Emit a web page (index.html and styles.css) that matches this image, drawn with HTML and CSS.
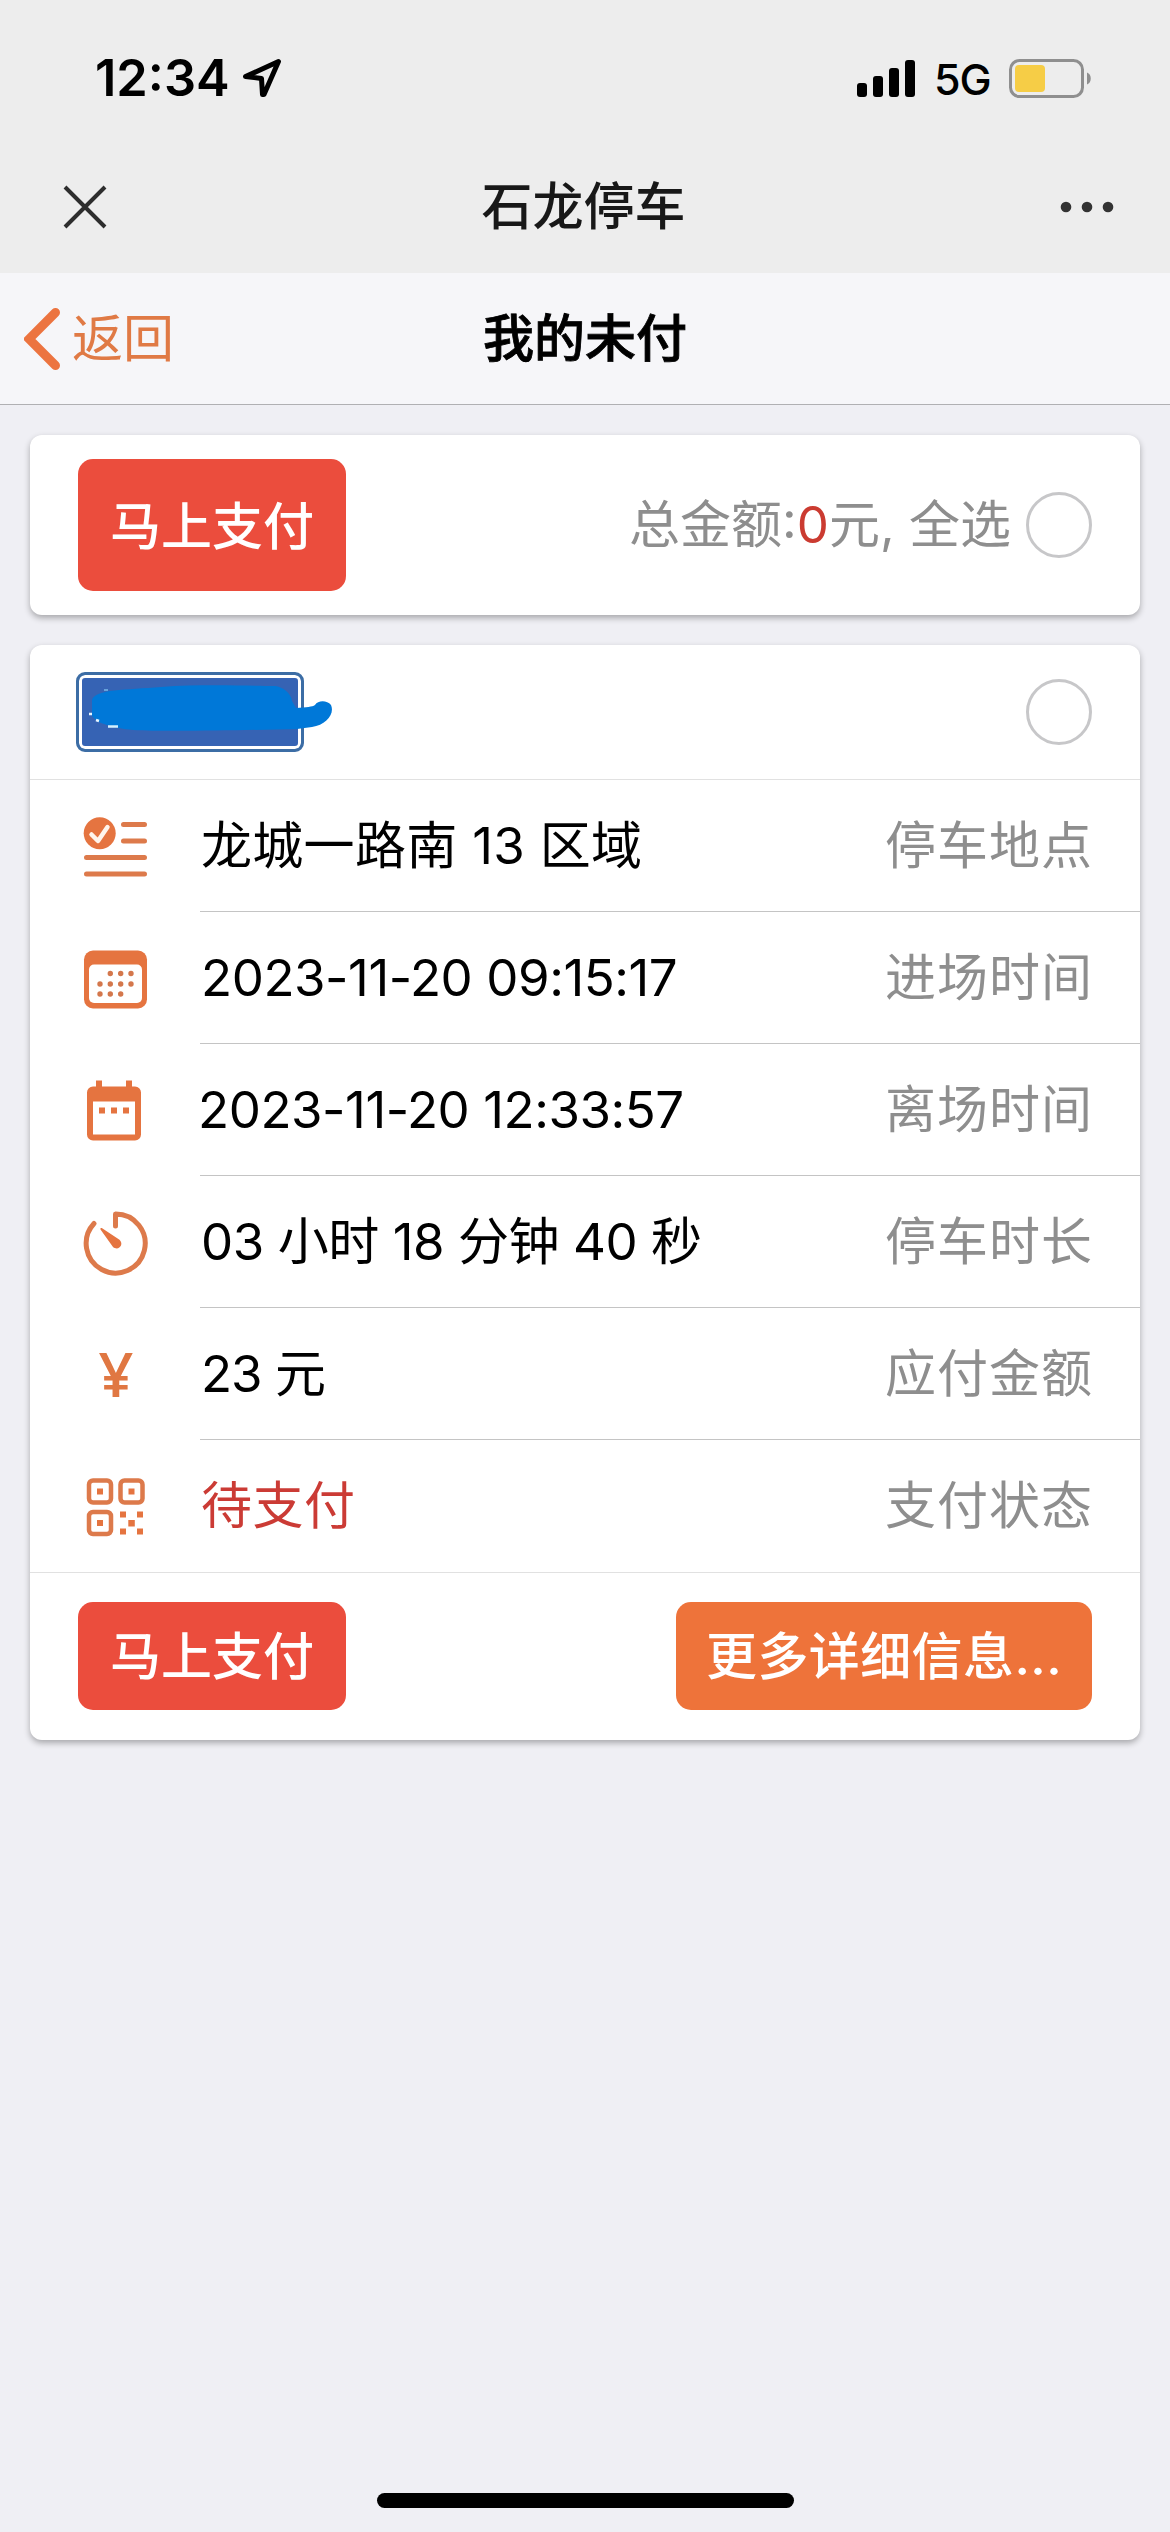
FILE: index.html
```html
<!DOCTYPE html>
<html lang="zh-CN">
<head>
    <meta charset="UTF-8">
    <meta name="viewport" content="width=device-width, initial-scale=1.0">
    <title>石龙停车</title>
    <link rel="stylesheet" href="styles.css">
</head>
<body>
    <!-- Status bar -->
    <div class="status-bar">
        <div class="status-left">
            <span class="clock">12:34</span>
            <svg class="location" viewBox="0 0 40 40">
                <path d="M3.5 18.5 36.5 3.5 22 36.5 20.5 36.5 19.5 20.5Z"/>
            </svg>
        </div>
        <div class="status-right">
            <svg class="signal" viewBox="0 0 58 37">
                <rect x="0" y="23" width="10" height="14" rx="3"/>
                <rect x="16" y="16" width="10" height="21" rx="3"/>
                <rect x="32" y="8" width="10" height="29" rx="3"/>
                <rect x="48" y="0" width="10" height="37" rx="3"/>
            </svg>
            <span class="network">5G</span>
            <svg class="battery" viewBox="0 0 83 39">
                <rect x="1.5" y="1.5" width="72" height="36" rx="9" fill="none" stroke="#8f8f8f" stroke-width="3"/>
                <rect x="6" y="6" width="30" height="27" rx="4" fill="#f6cd46"/>
                <path d="M78 13.5c5 1.5 5 10.500 0 12z" fill="#8f8f8f"/>
            </svg>
        </div>
    </div>

    <!-- Webview title bar -->
    <header class="app-bar">
        <svg class="close" viewBox="0 0 44 44">
            <path d="M2 2 42 42M42 2 2 42"/>
        </svg>
        <h1>石龙停车</h1>
        <svg class="more" viewBox="0 0 54 12">
            <circle cx="6" cy="6" r="5.300"/>
            <circle cx="27" cy="6" r="5.300"/>
            <circle cx="48" cy="6" r="5.300"/>
        </svg>
    </header>

    <nav class="navbar">
        <a class="back">
            <svg viewBox="0 0 36 62"><path d="M31.500 4.500 5 31 31.500 57.500"/></svg>
            <span>返回</span>
        </a>
        <h2>我的未付</h2>
    </nav>

    <main class="content">
        <section class="card summary">
            <button class="button button-pay">马上支付</button>
            <div class="total">总金额:<span class="amount">0</span>元, 全选</div>
            <span class="checkbox"></span>
        </section>

        <section class="card">
            <div class="card-header">
                <div class="plate">
                    <svg class="plate-mask" viewBox="0 0 248 50">
                        <path d="M4 16C7 5 38 6 73 3 115 0 161 2 187 2 195 3 203 9 204 17L208 24C219 23 224 23 227 21 230 16 239 16 243 21 247 30 238 41 224 43L209 45C160 46 80 48 45 46 27 44 9 40 4 32Z" fill="#0078d8"/>
                        <path d="M1 30h3M8 36l3 1" stroke="#e8f6ff" stroke-width="2.500"/>
                        <path d="M20 42.500h10" fill="none" stroke="#d5f0ff" stroke-width="2.500"/>
                        <path d="M16 6h4" stroke="#78b8e8" stroke-width="1.500"/>
                    </svg>
                </div>
                <span class="checkbox"></span>
            </div>

            <ul class="list">
                <li class="item">
                    <svg class="icon" viewBox="0 0 72 72">
                        <circle cx="19.700" cy="23.300" r="16"/>
                        <path class="check" d="M11.500 24.500 18 31 27.500 17"/>
                        <path class="line" d="M43.500 14.500H64.500M43.500 31H64.500M6.500 47.500H64.500M6.500 64H64.500"/>
                    </svg>
                    <div class="item-inner">
                        <span class="value value-place">龙城一路南 13 区域</span>
                        <span class="label">停车地点</span>
                    </div>
                </li>
                <li class="item">
                    <svg class="icon" viewBox="0 0 72 72">
                        <rect x="4" y="8.500" width="63" height="58" rx="9"/>
                        <rect class="paper" x="9" y="22.500" width="53" height="38.500" rx="5"/>
                        <path class="dots" d="M30.300 31.500h0M40.700 31.500h0M51 31.500h0M20 42h0M30.300 42h0M40.700 42h0M51 42h0M20 52h0M30.300 52h0M40.700 52h0"/>
                    </svg>
                    <div class="item-inner">
                        <span class="value">2023-11-20 09:15:17</span>
                        <span class="label">进场时间</span>
                    </div>
                </li>
                <li class="item">
                    <svg class="icon" viewBox="0 0 72 72">
                        <path d="M16 6.500h6v6h24v-6h6v6h3a6 6 0 0 1 6 6v42a6 6 0 0 1-6 6H13a6 6 0 0 1-6-6v-42a6 6 0 0 1 6-6h3z"/>
                        <rect class="paper" x="13" y="27.500" width="42" height="33"/>
                        <path d="M19 33.500h6v6h-6zM31 33.500h6v6h-6zM43 33.500h6v6h-6z"/>
                    </svg>
                    <div class="item-inner">
                        <span class="value value-leave">2023-11-20 12:33:57</span>
                        <span class="label">离场时间</span>
                    </div>
                </li>
                <li class="item">
                    <svg class="icon" viewBox="0 0 72 72">
                        <path class="line" d="M35.500 20V8A29.500 29.500 0 1 1 14 17.500"/>
                        <path d="M20.500 23.500C20 22 21.500 21.800 22.500 22.500L39.500 33.800C44.500 38.500 38.500 45.500 33 41Z"/>
                    </svg>
                    <div class="item-inner">
                        <span class="value">03 小时 18 分钟 40 秒</span>
                        <span class="label">停车时长</span>
                    </div>
                </li>
                <li class="item">
                    <span class="icon icon-yen">¥</span>
                    <div class="item-inner">
                        <span class="value value-price">23 元</span>
                        <span class="label">应付金额</span>
                    </div>
                </li>
                <li class="item">
                    <svg class="icon" viewBox="0 0 72 72">
                        <g class="frame">
                            <rect x="9" y="10.500" width="22" height="22" rx="4"/>
                            <rect x="40.500" y="10.500" width="22" height="22" rx="4"/>
                            <rect x="9" y="42" width="22" height="22" rx="4"/>
                        </g>
                        <path d="M17 18.500h6v6h-6zM48.500 18.500h6v6h-6zM17 50h6v6h-6zM40 41.500h6v6h-6zM57 41.500h6v6h-6zM48.300 50h6.500v6.500h-6.500zM40 58.500h6v6h-6zM57 58.500h6v6h-6z"/>
                    </svg>
                    <div class="item-inner">
                        <span class="value unpaid">待支付</span>
                        <span class="label">支付状态</span>
                    </div>
                </li>
            </ul>

            <div class="card-footer">
                <button class="button button-pay">马上支付</button>
                <button class="button button-more">更多详细信息...</button>
            </div>
        </section>
    </main>

    <div class="home-indicator"></div>
</body>
</html>
```

FILE: styles.css
```css
* {
    margin: 0;
    padding: 0;
    box-sizing: border-box;
}

body {
    width: 1170px;
    height: 2532px;
    display: flex;
    flex-direction: column;
    overflow: hidden;
    background: #efeff4;
    color: #000;
    font-family: Inter, "Noto Sans CJK SC", sans-serif;
    font-size: 51px;
    line-height: 60px;
}

svg {
    display: block;
    flex-shrink: 0;
}

/* Status bar */
.status-bar {
    display: flex;
    justify-content: space-between;
    height: 141px;
    padding: 48px 78px 0 95px;
    background: #ededed;
}

.status-left,
.status-right {
    display: flex;
    align-items: center;
    height: 60px;
}

.clock {
    width: 147px;
    font-size: 50.5px;
    font-weight: 600;
}

.location {
    width: 40px;
    height: 40px;
    fill: none;
    stroke: #000;
    stroke-width: 5;
    stroke-linejoin: round;
}

.signal {
    width: 58px;
    height: 37px;
}

.network {
    width: 58px;
    margin: 2px 17px 0 19px;
    font-size: 43px;
    font-weight: 500;
    letter-spacing: -1px;
}

.battery {
    width: 83px;
    height: 39px;
}

/* Webview title bar */
.app-bar {
    display: flex;
    justify-content: space-between;
    align-items: center;
    height: 132px;
    padding: 0 56px 0 63px;
    background: #ededed;
    color: #181818;
}

.app-bar h1,
.navbar h2 {
    font-size: 51px;
    font-weight: 500;
}

.navbar h2 {
    -webkit-text-stroke: 0.8px #000;
}

.close {
    width: 44px;
    height: 44px;
    stroke: #2d2d2d;
    stroke-width: 4;
}

.more {
    width: 54px;
    height: 12px;
    fill: #333;
}

.navbar {
    display: grid;
    grid-template-columns: 1fr auto 1fr;
    align-items: center;
    height: 132px;
    background: #f6f6f9;
    border-bottom: 1px solid #b0b0b3;
}

.back {
    display: flex;
    align-items: center;
    gap: 12px;
    padding-left: 24px;
    color: #e07a45;
}

.back svg {
    width: 36px;
    height: 62px;
    fill: none;
    stroke: #ec7440;
    stroke-width: 9;
    stroke-linecap: round;
}

/* Cards */
.content {
    display: flex;
    flex-direction: column;
    flex: 1;
    gap: 30px;
    padding: 30px;
}

.card {
    background: #fff;
    border-radius: 12px;
    box-shadow: 0 3px 6px rgba(0, 0, 0, 0.3);
}

.summary {
    display: flex;
    align-items: center;
    height: 180px;
    padding: 0 48px;
}

.button {
    height: 108px;
    padding-bottom: 5px;
    border: none;
    border-radius: 15px;
    color: #fff;
    font-family: inherit;
    font-size: 51px;
    font-weight: 500;
}

.button-pay {
    width: 268px;
    background: #eb4d3d;
}

.summary .button-pay {
    height: 132px;
}

.button-more {
    width: 416px;
    background: #ee733a;
    letter-spacing: 0.4px;
}

.total {
    margin-left: auto;
    margin-right: 15px;
    color: #8e8e8e;
}

.amount {
    color: #cb3b31;
}

.checkbox {
    width: 66px;
    height: 66px;
    border: 3px solid #c7c7c9;
    border-radius: 50%;
}

.card-header {
    display: flex;
    justify-content: space-between;
    align-items: center;
    height: 135px;
    padding: 0 48px 0 46px;
    border-bottom: 1px solid #e1e1e1;
}

/* Plate number, masked for privacy */
.plate {
    position: relative;
    width: 228px;
    height: 80px;
    border: 3px solid #3c6da5;
    border-radius: 9px;
    background: #3663b4;
    box-shadow: inset 0 0 0 3px #fff;
}

.plate-mask {
    position: absolute;
    left: 9px;
    top: 9px;
    width: 248px;
    height: 50px;
}

/* Order details */
.list {
    list-style: none;
}

.item {
    display: flex;
    align-items: center;
    height: 132px;
    padding-left: 50px;
}

.icon {
    width: 72px;
    height: 72px;
    fill: #e57440;
}

.icon .line {
    fill: none;
    stroke: #dd7a4b;
    stroke-width: 5;
    stroke-linecap: round;
    stroke-linejoin: round;
}

.icon .check {
    fill: none;
    stroke: #fff5ec;
    stroke-width: 4.5;
    stroke-linecap: round;
    stroke-linejoin: round;
}

.icon .paper {
    fill: #fff;
}

.icon .dots {
    stroke: #d4774c;
    stroke-width: 5.4;
    stroke-linecap: round;
}

.icon .frame {
    fill: none;
    stroke: #dd7a4b;
    stroke-width: 4.5;
}

.icon-yen {
    color: #e07742;
    font-family: "Open Sans", sans-serif;
    font-size: 61px;
    font-weight: 600;
    line-height: 72px;
    text-align: center;
}

.item-inner {
    display: flex;
    flex: 1;
    justify-content: space-between;
    align-items: center;
    height: 132px;
    margin-left: 48px;
    padding: 0 47px 0 1px;
    border-bottom: 1px solid #c4c4c4;
}

.item:last-child .item-inner {
    border-bottom: none;
}

.value {
    letter-spacing: -0.45px;
}

.value-place {
    letter-spacing: 0.3px;
}

.value-leave {
    margin-left: -3px;
}

.value-price {
    letter-spacing: -1px;
}

.label {
    color: #8e8e8e;
    letter-spacing: 1px;
}

.unpaid {
    color: #cb3b35;
    letter-spacing: 0.5px;
}

.card-footer {
    display: flex;
    justify-content: space-between;
    align-items: center;
    height: 168px;
    padding: 0 48px 2px;
    border-top: 1px solid #e1e1e1;
}

.home-indicator {
    width: 417px;
    height: 15px;
    margin: 0 auto 24px;
    border-radius: 8px;
    background: #000;
}
```
